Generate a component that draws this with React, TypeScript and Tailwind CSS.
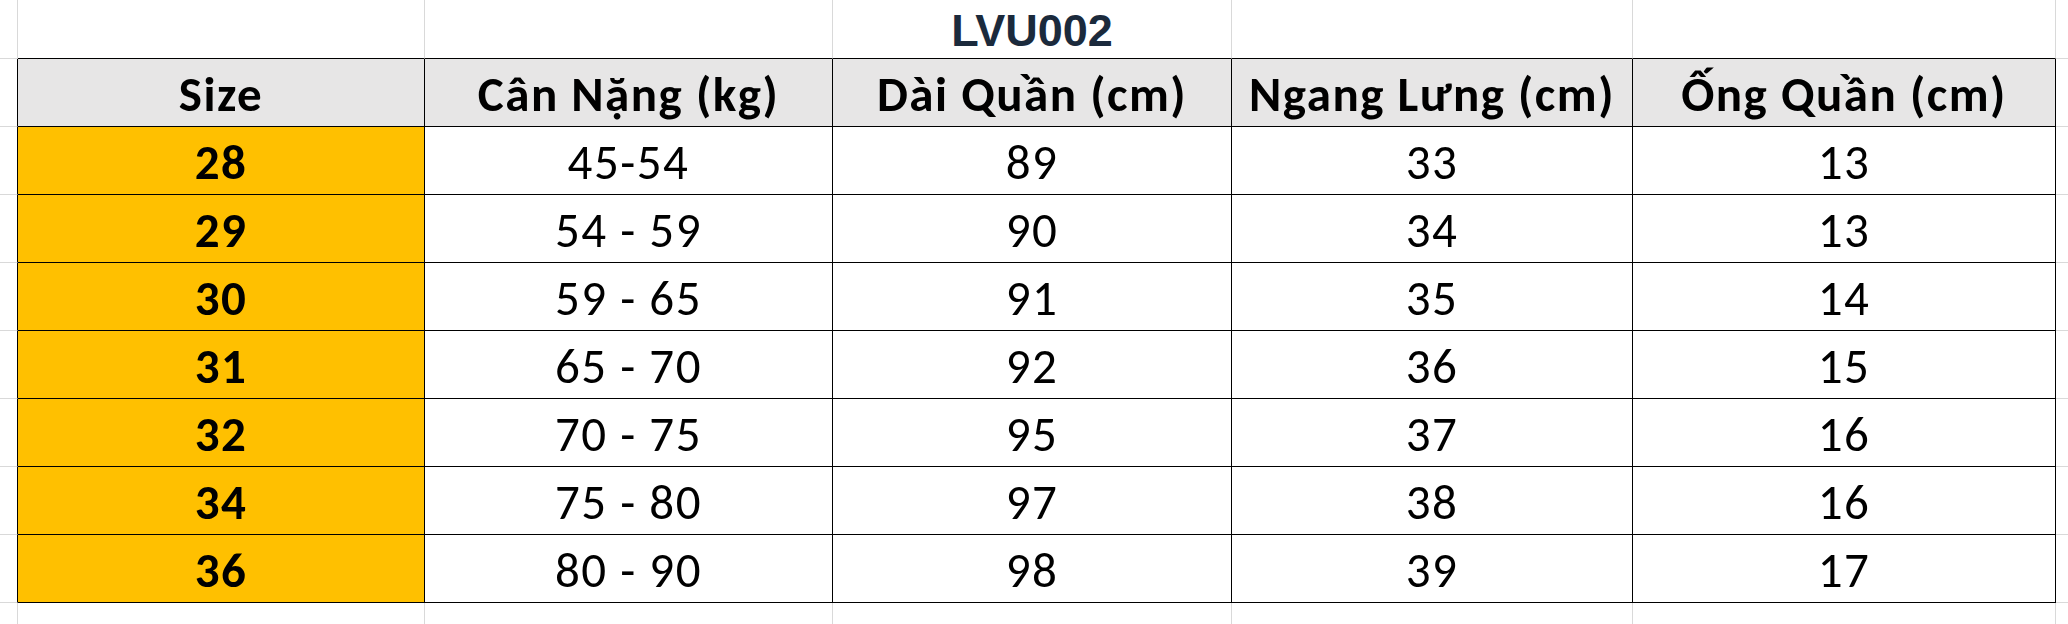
const headers = ["Size", "Cân Nặng (kg)", "Dài Quần (cm)", "Ngang Lưng (cm)", "Ống Quần (cm)"]

const rows = [
  ["28", "45-54", "89", "33", "13"],
  ["29", "54 - 59", "90", "34", "13"],
  ["30", "59 - 65", "91", "35", "14"],
  ["31", "65 - 70", "92", "36", "15"],
  ["32", "70 - 75", "95", "37", "16"],
  ["34", "75 - 80", "97", "38", "16"],
  ["36", "80 - 90", "98", "39", "17"],
]

const font = "font-['Calibri','Carlito','Lato',sans-serif]"

function App() {
  return (
    <div className="relative w-[2068px] h-[624px] bg-white overflow-hidden">
      <div className="grid grid-cols-[18px_407px_408px_399px_401px_423px_1fr] grid-rows-[59px_repeat(8,68px)_1fr] h-full">
        {/* title row: spreadsheet grid only */}
        <div className="border-b border-[#d9d9d9] border-r border-r-[#d9d9d9]" />
        {headers.map((_, i) => (
          <div key={i} className="border-b border-b-black border-r border-r-[#d9d9d9]" />
        ))}
        <div className="border-b border-[#d9d9d9]" />

        {/* header row */}
        <div className="border-b border-b-[#d9d9d9] border-r border-r-black" />
        {headers.map((h) => (
          <div
            key={h}
            className={`flex items-center justify-center pt-[4px] bg-[#e7e6e6] border-b border-r border-black text-[49px] font-bold text-black tracking-[1.5px] ${font}`}
          >
            {h}
          </div>
        ))}
        <div className="border-b border-[#d9d9d9]" />

        {rows.map((r) => (
          <div key={r[0]} className="contents">
            <div className="border-b border-b-[#d9d9d9] border-r border-r-black" />
            {r.map((v, i) => (
              <div
                key={i}
                className={`flex items-center justify-center pt-[4px] border-b border-r border-black text-[49px] tracking-[1.5px] text-black ${font} ${i === 0 ? "bg-[#ffc000] font-bold" : "bg-white"}`}
              >
                {v}
              </div>
            ))}
            <div className="border-b border-[#d9d9d9]" />
          </div>
        ))}

        {/* below table */}
        <div className="border-r border-[#d9d9d9]" />
        {headers.map((_, i) => (
          <div key={i} className="border-r border-[#d9d9d9]" />
        ))}
        <div />
      </div>

      <div className="absolute top-0 left-[18px] w-[2028px] h-[58px] flex items-center justify-center">
        <span className="font-['Liberation_Sans',Arial,sans-serif] font-bold text-[45px] text-[#1b2a3c] leading-none pt-[2px]">
          LVU002
        </span>
      </div>
    </div>
  )
}

export default App
